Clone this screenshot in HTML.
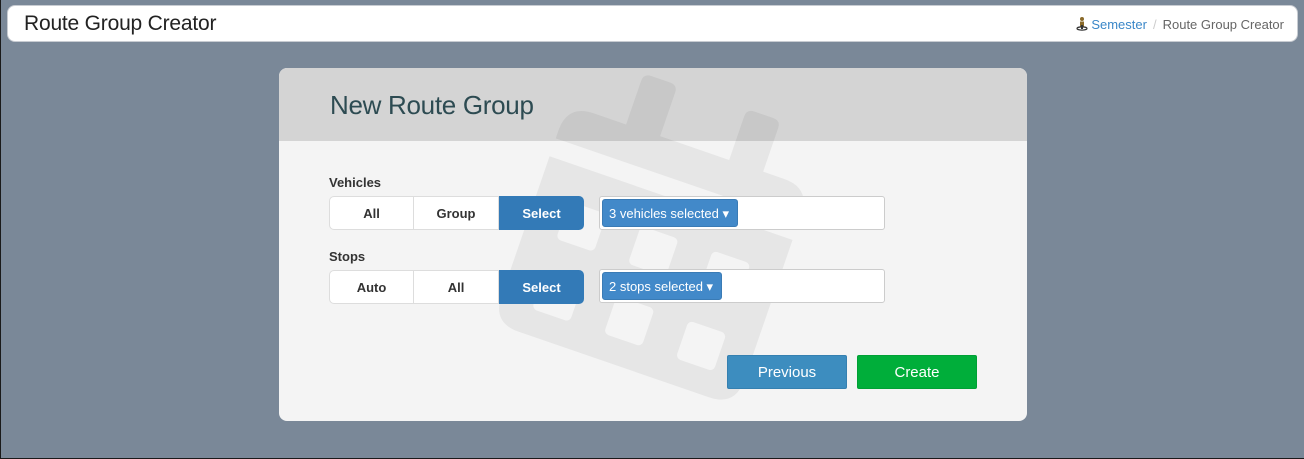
<!DOCTYPE html>
<html><head><meta charset="utf-8"><style>
*{box-sizing:border-box;margin:0;padding:0}
html,body{width:1304px;height:459px;overflow:hidden}
body{background:#7a8898;font-family:"Liberation Sans",sans-serif;position:relative;border:1px solid #1a1a1a;border-top:none;border-right:none}
.top{position:absolute;left:6px;top:5px;width:1291px;height:37px;background:#fff;border-radius:8px;border:1px solid #c8ccd2}
.top h1{position:absolute;left:16px;top:6px;font-size:21px;font-weight:normal;color:#222;letter-spacing:-0.2px}
.crumb{position:absolute;right:13px;top:11px;font-size:13px;color:#666}
.crumb a{color:#3a87c8;text-decoration:none}
.crumb .sep{color:#ccc;margin:0 6px}
.card{position:absolute;left:278px;top:68px;width:748px;height:353px;background:#f4f4f4;border-radius:8px;overflow:hidden}
.hd{position:absolute;left:0;top:0;width:748px;height:73px;background:#d4d4d4}
.hd h2{position:absolute;left:51px;top:22px;font-size:26px;font-weight:normal;color:#2d4b52;letter-spacing:-0.3px}
svg.bg{position:absolute;left:0;top:0}
.lbl{position:absolute;left:50px;font-size:13px;font-weight:bold;color:#333}
.seg{position:absolute;left:50px;width:255px;height:34px;display:flex}
.seg div{height:34px;line-height:34px;text-align:center;font-size:13px;font-weight:bold;color:#333;background:#fff;border:1px solid #ddd}
.seg div:first-child{border-radius:5px 0 0 5px;width:85px}
.seg div:nth-child(2){width:85px;border-left:none}
.seg div.on{width:85px;background:#337ab7;border-color:#337ab7;color:#fff;border-radius:0 5px 5px 0}
.ms{position:absolute;left:320px;width:286px;height:34px;background:#fff;border:1px solid #ccc;border-radius:3px}
.ms span{position:absolute;left:2px;top:2px;height:28px;line-height:28px;background:#4289c9;color:#fff;font-size:13px;padding:0 8px 0 6px;border-radius:3px;border:1px solid #3a7bb5}
.btn{position:absolute;top:287px;width:120px;height:34px;line-height:33px;text-align:center;color:#fff;font-size:15px;border-radius:2px}
</style></head><body>
<div class="top"><h1>Route Group Creator</h1>
<div class="crumb"><svg width="12" height="14" viewBox="0 0 12 14" style="vertical-align:-2px;margin-right:3px"><circle cx="6" cy="2" r="2" fill="#8a6a2a"/><rect x="4" y="4.5" width="4" height="5" fill="#8a6a2a"/><ellipse cx="6" cy="11.5" rx="5" ry="1.6" fill="none" stroke="#333" stroke-width="1.2"/><rect x="5" y="8" width="2" height="4" fill="#333"/></svg><a>Semester</a><span class="sep">/</span>Route Group Creator</div></div>
<div class="card">
<div class="hd"><h2>New Route Group</h2></div>
<svg class="bg" width="748" height="353" viewBox="279 68 748 353">
<defs><mask id="m" maskUnits="userSpaceOnUse" x="300" y="0" width="700" height="600"><rect x="300" y="0" width="700" height="600" fill="#fff"/>
<g fill="#000">
<rect x="500" y="176" width="300" height="19"/>
<rect x="556" y="231" width="40" height="40" rx="5"/>
<rect x="632" y="231" width="40" height="40" rx="5"/>
<rect x="708" y="231" width="40" height="40" rx="5"/>
<rect x="556" y="305" width="40" height="40" rx="5"/>
<rect x="632" y="305" width="40" height="40" rx="5"/>
<rect x="708" y="305" width="40" height="40" rx="5"/>
</g></mask></defs>
<g transform="rotate(19 652 255)" fill="#000" fill-opacity="0.055">
<g mask="url(#m)">
<path d="M551 140 H585 V94 Q585 86 593 86 H613 Q621 86 621 94 V140 H694 V94 Q694 86 702 86 H722 Q730 86 730 94 V140 H752 Q780 140 780 168 V343 Q780 371 752 371 H551 Q523 371 523 343 V168 Q523 140 551 140 Z"/>
</g>
</g></svg>
<div class="lbl" style="top:107px">Vehicles</div>
<div class="seg" style="top:128px"><div>All</div><div>Group</div><div class="on">Select</div></div>
<div class="ms" style="top:128px"><span>3 vehicles selected &#9662;</span></div>
<div class="lbl" style="top:181px">Stops</div>
<div class="seg" style="top:202px"><div>Auto</div><div>All</div><div class="on">Select</div></div>
<div class="ms" style="top:201px"><span>2 stops selected &#9662;</span></div>
<div class="btn" style="left:448px;background:#3d8dbf;border:1px solid #3580b0">Previous</div>
<div class="btn" style="left:578px;background:#00ae3a;border:1px solid #00a035">Create</div>
</div>
</body></html>
